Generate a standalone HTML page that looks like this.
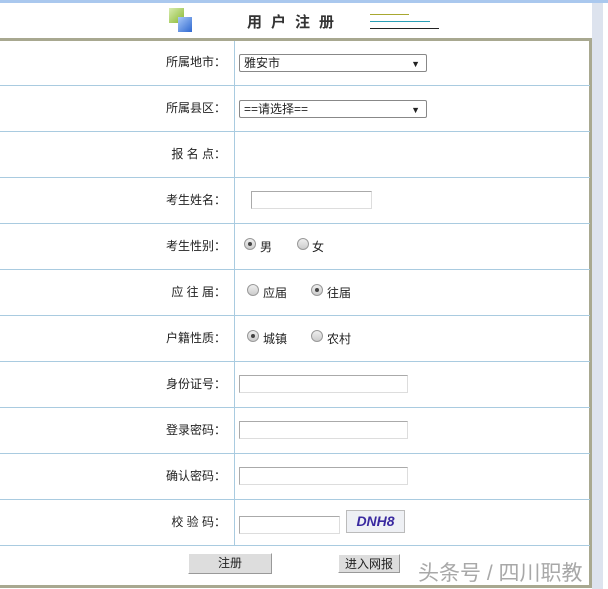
<!DOCTYPE html>
<html><head><meta charset="utf-8"><style>
*{margin:0;padding:0;box-sizing:border-box}
body{width:608px;height:589px;background:#fff;position:relative;overflow:hidden;font-family:"Liberation Sans","Noto Sans CJK SC",sans-serif;font-size:12px;color:#222}
.a{position:absolute}
.hl{position:absolute;left:0;width:590px;height:1px;background:#a9cbe0}
.lab{position:absolute;left:140px;width:86px;text-align:right;font-size:12px;line-height:14px}
.inp{position:absolute;height:18px;border:1px solid #aaa;border-right-color:#ddd;border-bottom-color:#ddd;background:#fff}
.sel{position:absolute;height:18px;border:1px solid #888;border-radius:2px;background:#fff;font-size:12px;line-height:14px;padding:1px 4px;width:188px;left:239px}
.sel:after{content:"▼";position:absolute;right:6px;top:2px;font-size:9px}
.r{position:absolute;width:12px;height:12px;border-radius:50%;border:1px solid #999;background:linear-gradient(#eee,#ccc)}
.r.on:after{content:"";position:absolute;left:3px;top:3px;width:4px;height:4px;border-radius:50%;background:#444}
.t{position:absolute;font-size:12px;line-height:14px}
.btn{position:absolute;background:#ddd;border:1px solid #999;border-top-color:#fff;border-left-color:#fff;text-align:center;font-size:12px;line-height:18px}
</style></head><body>
<div class="a" style="left:0;top:0;width:608px;height:3px;background:#aac8ee"></div>
<div class="a" style="left:592px;top:3px;width:11px;height:586px;background:#dde3ee"></div>
<div class="a" style="left:169px;top:8px;width:15px;height:15px;background:linear-gradient(135deg,#d8ecb0,#88b830)"></div>
<div class="a" style="left:178px;top:17px;width:14px;height:15px;background:linear-gradient(135deg,#a8c8f8,#2f68d0)"></div>
<div class="a" style="left:247px;top:11px;font-size:15px;font-weight:bold;letter-spacing:9px;color:#333">用户注册</div>
<div class="a" style="left:370px;top:14px;width:39px;height:1px;background:#a8a830"></div>
<div class="a" style="left:370px;top:21px;width:60px;height:1px;background:#2aa0b8"></div>
<div class="a" style="left:370px;top:28px;width:69px;height:1px;background:#222"></div>
<div class="a" style="left:0;top:38px;width:592px;height:3px;background:#a8a890"></div>
<div class="a" style="left:589px;top:38px;width:3px;height:550px;background:#a8a890"></div>
<div class="a" style="left:0;top:585px;width:592px;height:3px;background:#a8a890"></div>
<div class="a" style="left:234px;top:41px;width:1px;height:504px;background:#a9cbe0"></div>
<div class="hl" style="top:85px"></div><div class="hl" style="top:131px"></div><div class="hl" style="top:177px"></div><div class="hl" style="top:223px"></div><div class="hl" style="top:269px"></div><div class="hl" style="top:315px"></div><div class="hl" style="top:361px"></div><div class="hl" style="top:407px"></div><div class="hl" style="top:453px"></div><div class="hl" style="top:499px"></div><div class="hl" style="top:545px"></div>

<div class="lab" style="top:55px">所属地市：</div><div class="sel" style="top:54px">雅安市</div>
<div class="lab" style="top:101px">所属县区：</div><div class="sel" style="top:100px">==请选择==</div>
<div class="lab" style="top:147px">报 名 点：</div>
<div class="lab" style="top:193px">考生姓名：</div><div class="inp" style="left:251px;top:191px;width:121px"></div>
<div class="lab" style="top:239px">考生性别：</div>
<div class="r on" style="left:244px;top:238px"></div><div class="t" style="left:260px;top:240px">男</div>
<div class="r" style="left:297px;top:238px"></div><div class="t" style="left:312px;top:240px">女</div>
<div class="lab" style="top:285px">应 往 届：</div>
<div class="r" style="left:247px;top:284px"></div><div class="t" style="left:263px;top:286px">应届</div>
<div class="r on" style="left:311px;top:284px"></div><div class="t" style="left:327px;top:286px">往届</div>
<div class="lab" style="top:331px">户籍性质：</div>
<div class="r on" style="left:247px;top:330px"></div><div class="t" style="left:263px;top:332px">城镇</div>
<div class="r" style="left:311px;top:330px"></div><div class="t" style="left:327px;top:332px">农村</div>
<div class="lab" style="top:377px">身份证号：</div><div class="inp" style="left:239px;top:375px;width:169px"></div>
<div class="lab" style="top:423px">登录密码：</div><div class="inp" style="left:239px;top:421px;width:169px"></div>
<div class="lab" style="top:469px">确认密码：</div><div class="inp" style="left:239px;top:467px;width:169px"></div>
<div class="lab" style="top:515px">校 验 码：</div><div class="inp" style="left:239px;top:516px;width:101px"></div>
<div class="a" style="left:346px;top:510px;width:59px;height:23px;border:1px solid #bbb;background:#eef0f4;font-style:italic;font-weight:bold;font-size:14px;color:#3a2aa0;text-align:center;line-height:21px">DNH8</div>
<div class="btn" style="left:188px;top:553px;width:84px;height:21px">注册</div>
<div class="btn" style="left:338px;top:554px;width:62px;height:19px">进入网报</div>
<div class="a" style="left:418px;top:557px;font-size:21px;color:#999;opacity:.85;white-space:nowrap">头条号 / 四川职教</div>
</body></html>
